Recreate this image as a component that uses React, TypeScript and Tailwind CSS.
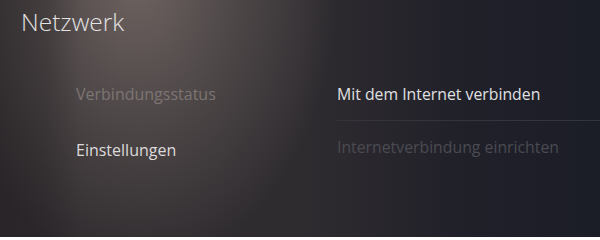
import React from "react";

export default function App() {
  return (
    <div
      className="w-[600px] h-[237px] overflow-hidden bg-[linear-gradient(90deg,rgba(28,25,28,0.3)_0px,rgba(28,25,28,0.22)_45px,rgba(28,25,28,0)_80px),radial-gradient(ellipse_200px_290px_at_138px_-20px,rgba(125,113,109,0.8),rgba(125,113,109,0.35)_55%,rgba(125,113,109,0)_100%),linear-gradient(90deg,#2e2a2d_0%,#2f2c30_50%,#29272d_62%,#202029_78%,#1b1d27_100%)]"
      style={{ fontFamily: '"Open Sans", "Noto Sans", sans-serif' }}
    >
      <div className="h-[66px] pl-[21px] pt-[6px]">
        <h1 className="text-[24.5px] leading-[32px] font-light text-[#e4e2e2]">
          Netzwerk
        </h1>
      </div>
      <div className="flex">
        <div className="w-[337px] pl-[76px] flex flex-col">
          <div className="h-[56px] flex items-center text-[16px] text-[#7c7573]">
            Verbindungsstatus
          </div>
          <div className="h-[56px] flex items-center text-[16px] text-[#dcdada]">
            Einstellungen
          </div>
        </div>
        <div className="flex-1 flex flex-col mt-[3px]">
          <div className="h-[52px] flex items-center text-[15.8px] text-[#e0e0e2] border-b border-[#34353c]">
            Mit dem Internet verbinden
          </div>
          <div className="h-[54px] flex items-center text-[15.8px] text-[#4a4b52]">
            Internetverbindung einrichten
          </div>
        </div>
      </div>
    </div>
  );
}
